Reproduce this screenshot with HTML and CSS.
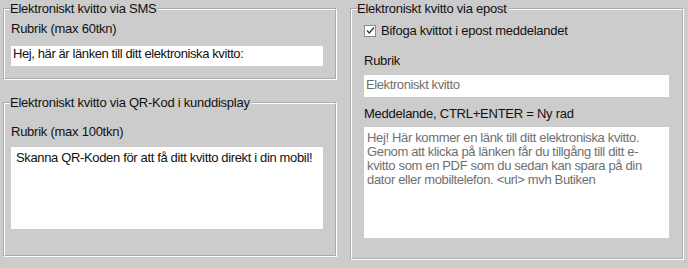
FILE: index.html
```html
<!DOCTYPE html>
<html lang="sv">
<head>
    <meta charset="UTF-8">
    <title>Elektroniskt kvitto</title>
    <link rel="stylesheet" href="styles.css">
</head>
<body>

    <div class="page">
        <div class="column">
            <fieldset class="group sms">
                <legend>Elektroniskt kvitto via SMS</legend>
                <label class="caption" for="smsTitle">Rubrik (max 60tkn)</label>
                <input class="field" id="smsTitle" type="text" value="Hej, här är länken till ditt elektroniska kvitto:">
            </fieldset>

            <fieldset class="group qr">
                <legend>Elektroniskt kvitto via QR-Kod i kunddisplay</legend>
                <label class="caption" for="qrTitle">Rubrik (max 100tkn)</label>
                <textarea class="area" id="qrTitle">Skanna QR-Koden för att få ditt kvitto direkt i din mobil!</textarea>
            </fieldset>
        </div>

        <fieldset class="group epost">
            <legend>Elektroniskt kvitto via epost</legend>
            <div class="inner">
                <label class="check-row">
                    <span class="check">
                        <svg width="9" height="9" viewBox="0 0 9 9">
                            <path d="M1 4.5 L3.3 7 L8 1.5" fill="none" stroke="#3c3c3c" stroke-width="1.4"/>
                        </svg>
                    </span>
                    Bifoga kvittot i epost meddelandet
                </label>
                <label class="caption" for="mailTitle">Rubrik</label>
                <input class="field dim" id="mailTitle" type="text" value="Elektroniskt kvitto">
                <label class="caption" for="mailBody">Meddelande, CTRL+ENTER = Ny rad</label>
                <textarea class="area dim" id="mailBody">Hej! Här kommer en länk till ditt elektroniska kvitto. Genom att klicka på länken får du tillgång till ditt e-kvitto som en PDF som du sedan kan spara på din dator eller mobiltelefon. &lt;url&gt; mvh Butiken</textarea>
            </div>
        </fieldset>
    </div>

</body>
</html>
```

FILE: styles.css
```css
body {
    margin: 0;
    background-color: #cccccc;
    font-family: "Liberation Sans", Arial, sans-serif;
    font-size: 13px;
    line-height: 15px;
    letter-spacing: -0.25px;
    color: #111;
}

.page {
    display: flex;
    gap: 13px;
    padding: 1px 4px 0 3px;
}

.column {
    display: flex;
    flex-direction: column;
    gap: 15px;
    width: 334px;
}

.group {
    margin: 0;
    padding: 0 6px;
    border: 2px groove #fff;
    min-width: 0;
    display: flex;
    flex-direction: column;
    align-items: flex-start;
}

legend {
    padding: 0 2px 0 0;
    margin-left: -1px;
    line-height: 15px;
}

.caption {
    display: block;
}

.field {
    box-sizing: border-box;
    border: none;
    outline: none;
    background-color: #fff;
    font-family: inherit;
    font-size: 13px;
    letter-spacing: -0.4px;
    color: #111;
    margin: 0;
}

.area {
    box-sizing: border-box;
    border: none;
    outline: none;
    resize: none;
    background-color: #fff;
    font-family: inherit;
    font-size: 13px;
    letter-spacing: -0.35px;
    color: #111;
    margin: 0;
    overflow: hidden;
}

.dim {
    color: #6f6f6f;
}

/* SMS */
.sms .caption {
    margin-top: 5px;
}

.sms .field {
    width: 312px;
    height: 20px;
    padding: 0 2px 5px;
    margin-top: 10px;
    margin-bottom: 12px;
}

/* QR */
.qr .caption {
    margin-top: 14px;
}

.qr .area {
    width: 312px;
    height: 82px;
    padding: 3px 5px;
    line-height: 15px;
    margin-top: 8px;
    margin-bottom: 26px;
}

/* epost */
.epost {
    width: 334px;
    box-sizing: border-box;
    height: 259px;
}

.epost .inner {
    display: flex;
    flex-direction: column;
    align-items: flex-start;
    padding-left: 6px;
}

.check-row {
    display: flex;
    align-items: center;
    gap: 5px;
    margin-top: 7px;
}

.check {
    box-sizing: border-box;
    width: 12px;
    height: 12px;
    border: 1px solid #8a8a8a;
    background-color: #fff;
    display: flex;
    align-items: center;
    justify-content: center;
}

.epost .caption {
    margin-top: 15px;
}

.epost .field {
    width: 305px;
    height: 22px;
    padding: 2px 2px 5px;
    margin-top: 7px;
}

.epost .field + .caption {
    margin-top: 9px;
}

.epost .area {
    width: 305px;
    height: 111px;
    padding: 4px 3px;
    line-height: 14px;
    margin-top: 6px;
}
```
